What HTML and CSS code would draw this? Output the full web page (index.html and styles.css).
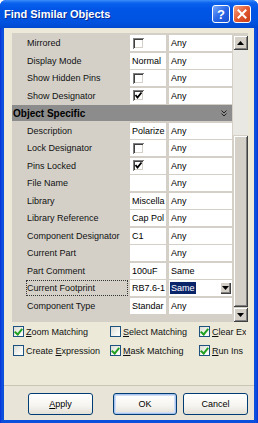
FILE: index.html
```html
<!DOCTYPE html>
<html>
<head>
<meta charset="utf-8">
<link rel="stylesheet" href="styles.css">
</head>
<body>
<div class="window">
  <div class="titlebar">
    <span class="title">Find Similar Objects</span>
    <div class="tb-buttons">
      <div class="tb-btn help">?</div>
      <div class="tb-btn close">
        <svg width="10" height="10" viewBox="0 0 10 10"><path d="M1.5 1.5 L8.5 8.5 M8.5 1.5 L1.5 8.5" stroke="#fff" stroke-width="2" stroke-linecap="square"/></svg>
      </div>
    </div>
  </div>
  <div class="client">
    <div class="grid-panel">
      <div class="rows">
        <div class="row"><div class="label">Mirrored</div><div class="val"><span class="cbx"></span></div><div class="any">Any</div></div>
        <div class="row"><div class="label">Display Mode</div><div class="val">Normal</div><div class="any">Any</div></div>
        <div class="row"><div class="label">Show Hidden Pins</div><div class="val"><span class="cbx"></span></div><div class="any">Any</div></div>
        <div class="row"><div class="label">Show Designator</div><div class="val"><span class="cbx"><svg width="9" height="9" viewBox="0 0 9 9"><path d="M1.5 4 L3.5 6.5 L7.5 1.5" fill="none" stroke="#000" stroke-width="1.8"/></svg></span></div><div class="any">Any</div></div>
        <div class="row group"><div class="band"><span>Object Specific</span><svg width="6" height="7" viewBox="0 0 6 7"><path d="M0.5 0.5 L3 3 L5.5 0.5 M0.5 3.5 L3 6 L5.5 3.5" fill="none" stroke="#222" stroke-width="1"/></svg></div></div>
        <div class="row"><div class="label">Description</div><div class="val">Polarize</div><div class="any">Any</div></div>
        <div class="row"><div class="label">Lock Designator</div><div class="val"><span class="cbx"></span></div><div class="any">Any</div></div>
        <div class="row"><div class="label">Pins Locked</div><div class="val"><span class="cbx"><svg width="9" height="9" viewBox="0 0 9 9"><path d="M1.5 4 L3.5 6.5 L7.5 1.5" fill="none" stroke="#000" stroke-width="1.8"/></svg></span></div><div class="any">Any</div></div>
        <div class="row"><div class="label">File Name</div><div class="val"></div><div class="any">Any</div></div>
        <div class="row"><div class="label">Library</div><div class="val">Miscella</div><div class="any">Any</div></div>
        <div class="row"><div class="label">Library Reference</div><div class="val">Cap Pol</div><div class="any">Any</div></div>
        <div class="row"><div class="label">Component Designator</div><div class="val">C1</div><div class="any">Any</div></div>
        <div class="row"><div class="label">Current Part</div><div class="val"></div><div class="any">Any</div></div>
        <div class="row"><div class="label">Part Comment</div><div class="val">100uF</div><div class="any">Same</div></div>
        <div class="row"><div class="label focus">Current Footprint</div><div class="val">RB7.6-1</div><div class="any combo"><span class="sel">Same</span><span class="dd"><svg width="7" height="4" viewBox="0 0 7 4"><path d="M0 0 H7 L3.5 4 Z" fill="#000"/></svg></span></div></div>
        <div class="row"><div class="label">Component Type</div><div class="val">Standar</div><div class="any">Any</div></div>
      </div>
      <div class="scrollbar">
        <div class="sb-btn"><svg width="7" height="4" viewBox="0 0 7 4"><path d="M0 4 H7 L3.5 0 Z" fill="#000"/></svg></div>
        <div class="sb-track"></div>
        <div class="sb-thumb"></div>
        <div class="sb-btn"><svg width="7" height="4" viewBox="0 0 7 4"><path d="M0 0 H7 L3.5 4 Z" fill="#000"/></svg></div>
      </div>
    </div>
    <div class="options">
      <div class="opt"><span class="xcb on"></span><span><u>Z</u>oom Matching</span></div>
      <div class="opt"><span class="xcb"></span><span><u>S</u>elect Matching</span></div>
      <div class="opt"><span class="xcb on"></span><span><u>C</u>lear Ex</span></div>
      <div class="opt"><span class="xcb"></span><span>Create <u>E</u>xpression</span></div>
      <div class="opt"><span class="xcb on"></span><span><u>M</u>ask Matching</span></div>
      <div class="opt"><span class="xcb on"></span><span><u>R</u>un Ins</span></div>
    </div>
    <div class="footer">
      <button class="btn apply"><u>A</u>pply</button>
      <button class="btn ok">OK</button>
      <button class="btn">Cancel</button>
    </div>
  </div>
</div>
</body>
</html>
```
FILE: styles.css
```css
* { box-sizing: border-box; margin: 0; padding: 0; }
html, body { width: 258px; height: 423px; overflow: hidden; }
body { font-family: "Liberation Sans", Arial, sans-serif; font-size: 9px; color: #000; background: #fff; }

.window { width: 258px; height: 423px; display: flex; flex-direction: column;
  background: linear-gradient(to right, #0831D9 0, #0A50DC 2px, #0A50DC 256px, #0831D9 258px);
  border-radius: 6px 6px 0 0; overflow: hidden; }

.titlebar { height: 28px; flex: none; display: flex; align-items: center; padding: 0 7px 0 4px;
  background: linear-gradient(to bottom, #3D8EF8 0, #0A62EE 3px, #0055E6 9px, #0054E3 18px, #0050DC 24px, #0047D0 28px); }
.title { flex: 1; color: #fff; font-weight: bold; font-size: 11px; text-shadow: 1px 1px 0 #0C2A8F; }
.tb-buttons { display: flex; gap: 3px; }
.tb-btn { width: 18px; height: 18px; border: 1px solid #fff; border-radius: 3px; display: flex; align-items: center; justify-content: center; }
.help { background: linear-gradient(135deg, #7AA8FA 0, #2A68E8 50%, #1A4FCF 100%); color: #fff; font-weight: bold; font-size: 13px; line-height: 1; }
.close { background: linear-gradient(135deg, #F5A285 0, #E35A31 50%, #C63C16 100%); }

.client { flex: 1; margin: 0 4px 3px; background: #ECE9D8; display: flex; flex-direction: column; }

.grid-panel { margin: 5px 6px 0 8px; height: 289px; flex: none; background: #D4D0C8; padding-top: 2px; display: flex; gap: 1px; }
.rows { width: 220px; display: flex; flex-direction: column; }
.row { height: 17.5px; flex: none; display: flex; }
.label { width: 116px; padding-left: 15px; height: 16px; line-height: 16px; white-space: nowrap; color: #111; }
.label.focus { margin-left: 14px; width: 102px; padding-left: 1px; outline: 1px dotted #333; outline-offset: -1px; }
.val { width: 36px; margin-left: 2px; height: 16px; line-height: 16px; background: #fff; overflow: hidden; white-space: nowrap; padding-left: 2px; display: flex; align-items: center; }
.any { width: 63px; margin-left: 3px; height: 16px; line-height: 16px; background: #fff; overflow: hidden; white-space: nowrap; padding-left: 2px; }
.cbx { width: 11px; height: 11px; margin-left: 1px; background: #fff; display: flex; align-items: center; justify-content: center;
  box-shadow: inset 1px 1px #808080, inset -1px -1px #fff, inset 2px 2px #404040, inset -2px -2px #D4D0C8; }
.combo { display: flex; align-items: center; padding-left: 1px; }
.sel { background: #0A246A; color: #fff; padding: 0 1px; height: 12px; line-height: 12px; }
.dd { margin-left: auto; margin-right: 1px; width: 11px; height: 12px; background: #D4D0C8; display: flex; align-items: center; justify-content: center;
  box-shadow: inset 1px 1px #fff, inset -1px -1px #404040, inset -2px -2px #808080; }

.group .band { width: 220px; height: 16px; background: #8C8C8C; display: flex; align-items: center; justify-content: space-between; padding: 0 5px 0 1px;
  font-weight: bold; font-size: 10px; color: #000; }

.scrollbar { width: 15px; display: flex; flex-direction: column; }
.sb-btn { height: 15px; flex: none; background: #D4D0C8; display: flex; align-items: center; justify-content: center;
  box-shadow: inset 1px 1px #D4D0C8, inset -1px -1px #404040, inset 2px 2px #fff, inset -2px -2px #808080; }
.sb-track { height: 85px; flex: none; background: #EAE8E2; }
.sb-thumb { height: 172px; flex: none; background: #D4D0C8;
  box-shadow: inset 1px 1px #D4D0C8, inset -1px -1px #404040, inset 2px 2px #fff, inset -2px -2px #808080; }

.options { display: grid; grid-template-columns: 97px 89px 47px; grid-auto-rows: 19px; padding-left: 9px; align-items: center; }
.opt { display: flex; align-items: center; gap: 2px; white-space: nowrap; overflow: hidden; color: #111; }
.xcb { width: 11px; height: 11px; flex: none; border: 1px solid #1C5180; background: linear-gradient(135deg, #DCDCD6 0, #F4F4F0 60%, #FFFFFF 100%); position: relative; }
.xcb.on::after { content: ""; position: absolute; left: 2px; top: 0px; width: 3px; height: 6px; border: solid #21A121; border-width: 0 2px 2px 0; transform: rotate(40deg); }

.footer { margin-top: auto; height: 35px; border-top: 1px solid #C9C6B6; background: #E8E5D8; display: flex; justify-content: flex-end; padding: 7px 6px 0 0; }
.btn { height: 22px; width: 65px; font-family: "Liberation Sans", Arial, sans-serif; font-size: 9px; color: #000; border: 1px solid #003C74; border-radius: 3px;
  background: linear-gradient(to bottom, #FFFFFF 0, #F5F4EF 60%, #E3E0D6 100%); }
.apply { margin-right: 20px; }
.ok { width: 64px; margin-right: 6px; box-shadow: inset 0 0 0 1px #A8C4EE, inset 0 0 0 2px #CEDCF5; }
```
